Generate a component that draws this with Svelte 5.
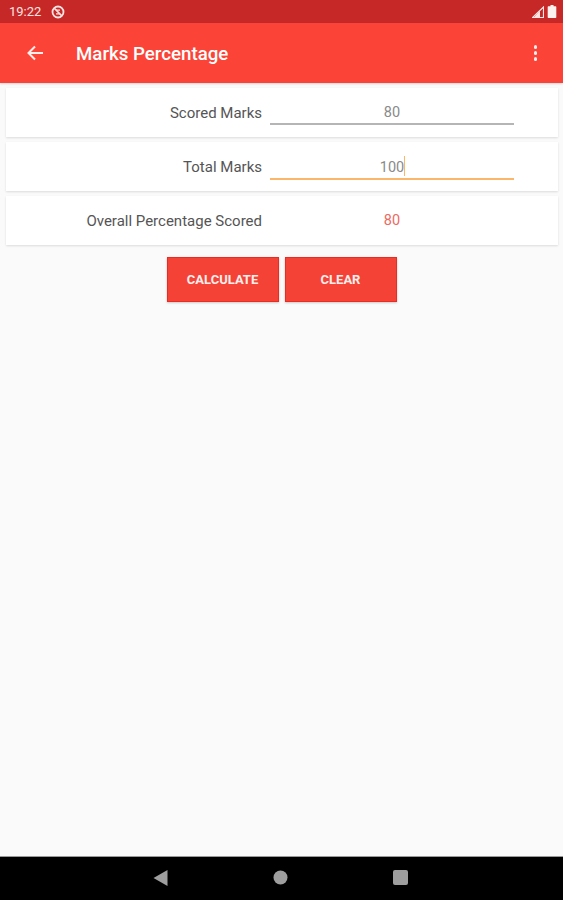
<script>
  let scored = $state('80');
  let total = $state('100');
  let result = $state('80');

  function calculate() {
    result = String((Number(scored) / Number(total)) * 100);
  }

  function clear() {
    scored = '';
    total = '';
    result = '';
  }
</script>

<div class="screen">
  <div class="status-bar">
    <div class="status-left">
      <span class="time">19:22</span>
      <svg class="status-icon" width="14" height="14" viewBox="0 0 14 14">
        <circle cx="7" cy="7" r="5.5" fill="none" stroke="#fbe4e2" stroke-width="1.8" />
        <path d="M3.400 3.400l7.200 7.200" stroke="#fbe4e2" stroke-width="1.500" />
        <path d="M5 5.200h4M5 8.800h4" stroke="#fbe4e2" stroke-width="1.200" />
      </svg>
    </div>
    <div class="status-right">
      <svg width="12" height="12" viewBox="0 0 12 12">
        <path d="M11.500 1v10.500H.5z" fill="none" stroke="#fbe4e2" stroke-width="1.200" />
        <path d="M8 4.800v6.700H1.800z" fill="#fbe4e2" />
      </svg>
      <svg width="10" height="13" viewBox="0 0 10 13">
        <path d="M3.500 0h3v1.200H8.600a.7.7 0 0 1 .7.7v10.400a.7.7 0 0 1-.7.7H1.400a.7.7 0 0 1-.7-.7V1.900a.7.7 0 0 1 .7-.7h2.100z" fill="#fdf1f0" />
      </svg>
    </div>
  </div>

  <header class="app-bar">
    <button class="icon-btn back" aria-label="Back">
      <svg width="20" height="20" viewBox="0 0 20 20">
        <path d="M18 10H4M10 3.500L3.500 10l6.500 6.500" fill="none" stroke="#fdeeed" stroke-width="2" />
      </svg>
    </button>
    <h1>Marks Percentage</h1>
    <button class="icon-btn more" aria-label="More options">
      <span></span><span></span><span></span>
    </button>
  </header>

  <main>
    <div class="card">
      <label for="scored">Scored Marks</label>
      <input id="scored" type="text" bind:value={scored} />
    </div>
    <div class="card">
      <label for="total">Total Marks</label>
      <div class="focused">
        <span class="typed">{total}<i class="caret"></i></span>
      </div>
    </div>
    <div class="card">
      <span class="label">Overall Percentage Scored</span>
      <span class="result">{result}</span>
    </div>

    <div class="buttons">
      <button class="action" onclick={calculate}>CALCULATE</button>
      <button class="action" onclick={clear}>CLEAR</button>
    </div>
  </main>

  <nav class="nav-bar">
    <svg width="15" height="16" viewBox="0 0 15 16"><path d="M14.500 0v16L.5 8z" fill="#9e9e9e" /></svg>
    <svg width="15" height="15" viewBox="0 0 15 15"><circle cx="7.500" cy="7.500" r="7" fill="#9e9e9e" /></svg>
    <svg width="15" height="15" viewBox="0 0 15 15"><rect width="15" height="15" rx="2" fill="#9e9e9e" /></svg>
  </nav>
</div>

<style>
  :global(body) {
    margin: 0;
    font-family: Roboto, "Liberation Sans", sans-serif;
  }

  .screen {
    width: 563px;
    height: 900px;
    display: flex;
    flex-direction: column;
    background: #fafafa;
    overflow: hidden;
  }

  .status-bar {
    height: 23px;
    background: #c62828;
    display: flex;
    align-items: center;
    justify-content: space-between;
    padding: 0 6px 0 9px;
    color: #fbe4e2;
    font-size: 13px;
  }

  .status-left {
    display: flex;
    align-items: center;
    gap: 10px;
  }

  .status-right {
    display: flex;
    align-items: center;
    gap: 3px;
  }

  .app-bar {
    height: 60px;
    background: #fb4437;
    display: flex;
    align-items: center;
    color: #fff;
    box-shadow: 0 1px 2px rgba(0, 0, 0, 0.15);
  }

  .icon-btn {
    background: none;
    border: none;
    padding: 0;
    display: flex;
  }

  .back {
    margin-left: 25px;
  }

  h1 {
    margin: 2px 0 0 31px;
    font-size: 18.700px;
    font-weight: 500;
    flex: 1;
  }

  .more {
    flex-direction: column;
    gap: 2.500px;
    margin-right: 26px;
  }

  .more span {
    width: 3.500px;
    height: 3.500px;
    background: #fdeeed;
    border-radius: 50%;
  }

  main {
    flex: 1;
    padding: 5px 5px 0 6px;
    display: flex;
    flex-direction: column;
    gap: 5px;
  }

  .card {
    height: 49px;
    background: #fff;
    box-shadow: 0 1px 2px rgba(0, 0, 0, 0.12);
    display: grid;
    grid-template-columns: 256px 245px;
    column-gap: 8px;
    align-items: center;
    font-size: 15px;
    color: #555;
  }

  .card label,
  .label {
    text-align: right;
  }

  input,
  .focused {
    box-sizing: border-box;
    width: 244px;
    height: 26px;
    margin-bottom: 1px;
    border: none;
    border-bottom: 2px solid #b5b5b5;
    background: none;
    outline: none;
    text-align: center;
    font: inherit;
    font-size: 14.500px;
    color: #8a8a8a;
    padding: 3px 0 0;
  }

  .focused {
    height: 27px;
    margin-bottom: 0;
    border-bottom-color: #fbb66c;
    display: flex;
    justify-content: center;
    align-items: center;
  }

  .typed {
    position: relative;
  }

  .caret {
    position: absolute;
    right: -1px;
    top: -3px;
    width: 1.500px;
    height: 20px;
    background: #fbb66c;
  }

  .result {
    text-align: center;
    margin-right: 1px;
    font-size: 14.500px;
    color: #ee6a62;
  }

  .buttons {
    display: flex;
    justify-content: center;
    gap: 6px;
    margin-top: 7px;
    padding-right: 1px;
  }

  .action {
    width: 112px;
    height: 45px;
    background: #f44336;
    border: 1px solid #ee2a20;
    box-shadow: 0 1px 2px rgba(0, 0, 0, 0.2);
    color: #fdeeed;
    font-family: inherit;
    font-size: 13px;
    font-weight: 700;
    padding: 0;
  }

  .nav-bar {
    height: 44px;
    background: #000;
    border-top: 1px solid #999;
    display: flex;
    align-items: center;
    justify-content: center;
    gap: 105px;
    padding: 0 2px 2px 0;
    box-sizing: border-box;
  }
</style>
